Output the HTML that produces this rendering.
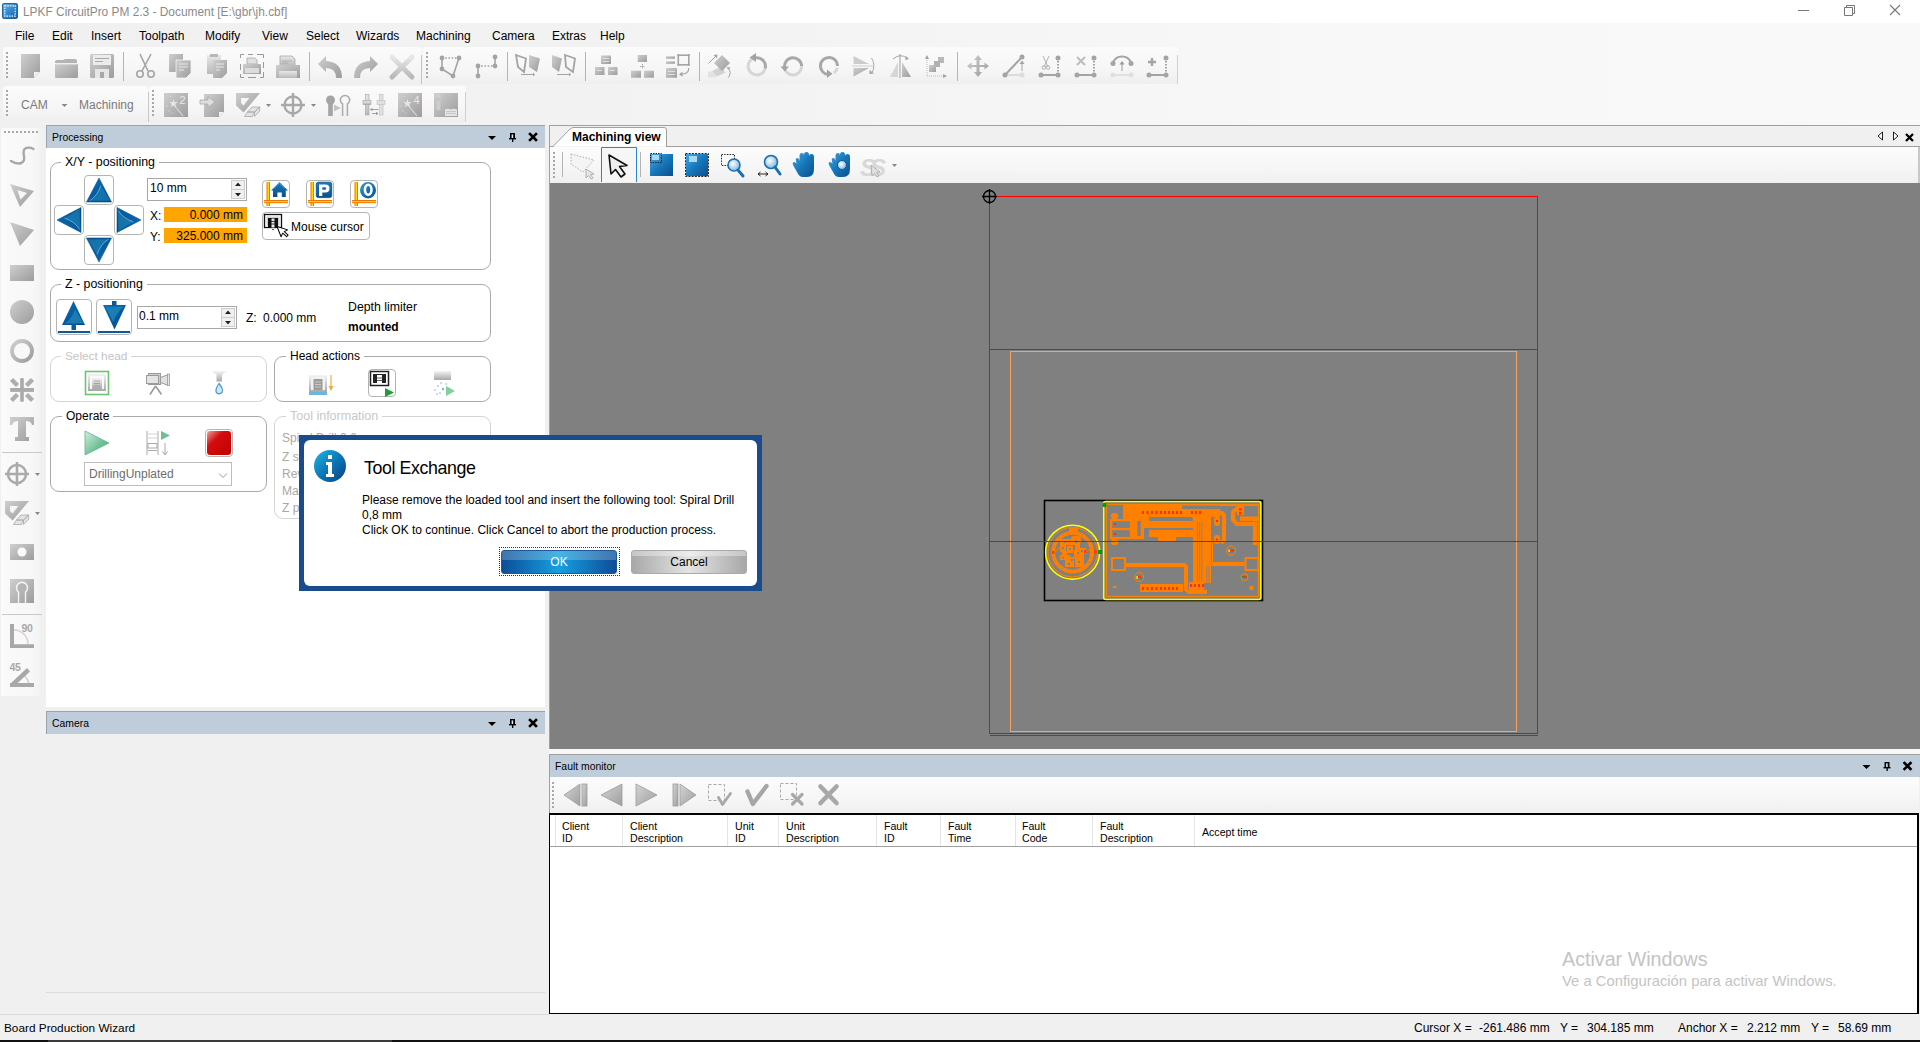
<!DOCTYPE html>
<html><head><meta charset="utf-8">
<style>
*{box-sizing:border-box;margin:0;padding:0}
html,body{width:1920px;height:1042px;overflow:hidden;background:#f0f0f0;font-family:"Liberation Sans",sans-serif;font-size:12px;color:#000;position:relative}
.a{position:absolute}
.t{position:absolute;white-space:nowrap;line-height:1}
svg{position:absolute;overflow:visible}
</style></head><body>
<!-- ===== TITLE BAR ===== -->
<div class="a" style="left:0;top:0;width:1920px;height:23px;background:#fff"></div>
<svg style="left:2px;top:3px" width="16" height="16" viewBox="0 0 17 17"><defs><linearGradient id="tg" x1="0" y1="0" x2="1" y2="1"><stop offset="0" stop-color="#5fb3ea"/><stop offset="1" stop-color="#0b5ea8"/></linearGradient></defs><rect x="0.5" y="0.5" width="16" height="16" rx="1.5" fill="url(#tg)" stroke="#1a5e9a"/><rect x="3" y="3" width="11" height="11" fill="none" stroke="#fff" stroke-width="1.2" stroke-dasharray="1.5 1.2"/></svg>
<div class="t" style="left:23px;top:7px;font-size:11.9px;color:#8a8a8a">LPKF CircuitPro PM 2.3 - Document [E:\gbr\jh.cbf]</div>
<svg style="left:1797px;top:4px" width="104" height="12"><path d="M1 6.5H12" stroke="#777" stroke-width="1"/><path d="M47.5 3.5h8v8h-8z M49.5 3.5v-2h8v8h-2" fill="none" stroke="#777"/><path d="M93 1L103 11M103 1L93 11" stroke="#777" stroke-width="1.1"/></svg>
<!-- ===== MENU + TOOLBAR AREA ===== -->
<div class="a" style="left:0;top:23px;width:1920px;height:102px;background:linear-gradient(90deg,#f0f0f0 0%,#f3f3f3 40%,#f8f8f8 70%,#f9f9f9 100%)"></div>
<div class="t" style="top:29.5px;left:15px">File</div>
<div class="t" style="top:29.5px;left:52px">Edit</div>
<div class="t" style="top:29.5px;left:91px">Insert</div>
<div class="t" style="top:29.5px;left:139px">Toolpath</div>
<div class="t" style="top:29.5px;left:205px">Modify</div>
<div class="t" style="top:29.5px;left:262px">View</div>
<div class="t" style="top:29.5px;left:306px">Select</div>
<div class="t" style="top:29.5px;left:356px">Wizards</div>
<div class="t" style="top:29.5px;left:416px">Machining</div>
<div class="t" style="top:29.5px;left:492px">Camera</div>
<div class="t" style="top:29.5px;left:552px">Extras</div>
<div class="t" style="top:29.5px;left:600px">Help</div>
<!-- toolbar backgrounds -->
<div class="a" style="left:3px;top:47px;width:419px;height:37px;border-radius:3px 3px 0 0;background:linear-gradient(#fbfbfb,#f6f6f6 60%,#efefef)"></div>
<div class="a" style="left:423px;top:47px;width:755px;height:37px;border-radius:3px 3px 0 0;background:linear-gradient(#fbfbfb,#f6f6f6 60%,#efefef)"></div>
<div class="a" style="left:421px;top:55px;width:1px;height:29px;background:#c4c4c4"></div>
<div class="a" style="left:1177px;top:55px;width:1px;height:29px;background:#d0d0d0"></div>
<div class="a" style="left:3px;top:86px;width:145px;height:36px;border-radius:3px 3px 0 0;background:linear-gradient(#fbfbfb,#f6f6f6 60%,#efefef)"></div>
<div class="a" style="left:149px;top:86px;width:317px;height:36px;border-radius:3px 3px 0 0;background:linear-gradient(#fbfbfb,#f6f6f6 60%,#efefef)"></div>
<div class="a" style="left:148px;top:92px;width:1px;height:30px;background:#c8c8c8"></div>
<div class="a" style="left:465px;top:92px;width:1px;height:30px;background:#d0d0d0"></div>
<svg style="left:0;top:0" width="1200" height="130">
<defs>
<linearGradient id="g1" x1="0" y1="0" x2="1" y2="1"><stop offset="0" stop-color="#cfcfcf"/><stop offset="1" stop-color="#9c9c9c"/></linearGradient>
<linearGradient id="g2" x1="0" y1="0" x2="0" y2="1"><stop offset="0" stop-color="#e8e8e8"/><stop offset="1" stop-color="#b8b8b8"/></linearGradient>
</defs>
<g fill="#a8a8a8">
<!-- grips -->
<path d="M6 52h2v2h-2zM6 56h2v2h-2zM6 60h2v2h-2zM6 64h2v2h-2zM6 68h2v2h-2zM6 72h2v2h-2zM6 76h2v2h-2z"/>
<path d="M426 52h2v2h-2zM426 56h2v2h-2zM426 60h2v2h-2zM426 64h2v2h-2zM426 68h2v2h-2zM426 72h2v2h-2zM426 76h2v2h-2z"/>
<path d="M6 90h2v2h-2zM6 94h2v2h-2zM6 98h2v2h-2zM6 102h2v2h-2zM6 106h2v2h-2zM6 110h2v2h-2zM6 114h2v2h-2z"/>
<path d="M152 90h2v2h-2zM152 94h2v2h-2zM152 98h2v2h-2zM152 102h2v2h-2zM152 106h2v2h-2zM152 110h2v2h-2zM152 114h2v2h-2z"/>
</g>
<!-- separators -->
<g fill="#b4b4b4"><rect x="123" y="52" width="1" height="29"/><rect x="309" y="52" width="1" height="29"/><rect x="507" y="52" width="1" height="29"/><rect x="585" y="52" width="1" height="29"/><rect x="699" y="52" width="1" height="29"/><rect x="957" y="52" width="1" height="29"/></g>
<!-- new -->
<path d="M21 54H40V72L34 78H21Z" fill="url(#g1)"/><path d="M34 78V72H40Z" fill="#f0f0f0"/>
<!-- open -->
<path d="M55 62Q55 60 57 60H63L65 59H75Q77 59 77 61V63H55Z" fill="#b4b4b4"/><path d="M55 64H78V77Q78 78 76 78H56Q55 78 55 77Z" fill="url(#g1)"/><path d="M56 64H77" stroke="#e6e6e6" stroke-width="1"/>
<!-- save -->
<rect x="90" y="54" width="24" height="24" rx="1.5" fill="url(#g1)"/><rect x="93" y="55" width="18" height="10" fill="#ececec"/><path d="M95 58.5H109M95 61.5H103" stroke="#a8a8a8" stroke-width="1.2"/><rect x="95" y="69" width="14" height="9" fill="#e6e6e6"/><rect x="100" y="72" width="4" height="6" fill="#a8a8a8"/>
<!-- cut -->
<g stroke="#a4a4a4" fill="none" stroke-width="1.6"><path d="M140 54L148 71M151 54L142 71"/><circle cx="140" cy="74" r="3.2"/><circle cx="151" cy="74" r="3.2"/></g>
<!-- copy -->
<path d="M169 54H183V72H169Z" fill="url(#g1)"/><path d="M176 60H191V73L186 78H176Z" fill="url(#g1)" stroke="#f4f4f4" stroke-width="0.8"/><path d="M179 64H188M179 67H188M179 70H184" stroke="#e8e8e8"/>
<!-- paste -->
<path d="M207 55H221V74H207Z" fill="url(#g2)"/><rect x="210" y="54" width="8" height="3" fill="#b8b8b8"/><path d="M213 60H227V73L222 78H213Z" fill="url(#g1)"/><path d="M216 64H224M216 67H224M216 70H220" stroke="#e8e8e8"/>
<!-- print preview -->
<path d="M240.5 58V54.5H244M248 54.5H253M257 54.5H263.5V58M263.5 62V68M263.5 72V77.5H260M256 77.5H248M244 77.5H240.5V74M240.5 70V64" stroke="#999" fill="none" stroke-dasharray="0"/><path d="M247 58H255L257 60V64H247Z" fill="#e0e0e0" stroke="#a8a8a8" stroke-width="0.8"/><path d="M243 64H261V74H243Z" fill="url(#g1)"/><rect x="245" y="68" width="14" height="5" fill="#dcdcdc"/>
<!-- print -->
<path d="M280 56H292L295 59V66H280Z" fill="url(#g2)" stroke="#a8a8a8" stroke-width="0.8"/><path d="M282 61H292M282 63H288" stroke="#a8a8a8" stroke-width="0.8"/><path d="M276 65H300V78H276Z" fill="url(#g1)"/><rect x="279" y="71" width="18" height="7" fill="url(#g2)"/>
<!-- undo -->
<path d="M318 64L326 56V61Q342 62 342 78H336Q336 68 326 68V72Z" fill="url(#g1)"/>
<!-- redo -->
<path d="M378 64L370 56V61Q354 62 354 78H360Q360 68 370 68V72Z" fill="url(#g1)"/>
<!-- delete -->
<path d="M392 57L412 77M412 57L392 77" stroke="url(#g2)" stroke-width="5" stroke-linecap="round"/>
<!-- polygon -->
<g stroke="#a4a4a4" stroke-width="1.6" fill="none"><path d="M442 58V69L453 76L459 58"/><path d="M442 58H459" stroke-dasharray="1.6 1.6"/></g><g fill="#a4a4a4"><circle cx="442" cy="58" r="2.4"/><circle cx="459" cy="58" r="2.4"/><circle cx="442" cy="69" r="2.4"/><circle cx="453" cy="76" r="2.4"/></g>
<!-- line dots -->
<g stroke="#a4a4a4" stroke-width="1.6" fill="none"><path d="M495 57V66M478 66V76"/><path d="M478 66H495" stroke-dasharray="1.6 1.6"/></g><g fill="#a4a4a4"><circle cx="495" cy="57" r="2.4"/><circle cx="495" cy="66" r="2.4"/><circle cx="478" cy="66" r="2.4"/><circle cx="478" cy="76" r="2.4"/></g>
<!-- mirror-ish 1 -->
<path d="M516 55L526 58.5L524 72L518 67Z" fill="none" stroke="#a4a4a4" stroke-width="1.8"/><path d="M529 55L540 58.5L537 72L529 67Z" fill="url(#g1)"/><path d="M521 74.5H534" stroke="#a4a4a4"/><path d="M533 72.5L535 74.5L533 76.5Z" fill="#a4a4a4"/>
<path d="M552 55L562 58.5L559 72L552 67Z" fill="url(#g1)"/><path d="M565 55L575 58.5L573 72L566 67Z" fill="none" stroke="#a4a4a4" stroke-width="1.8"/><path d="M557 74.5H570" stroke="#a4a4a4"/><path d="M569 72.5L571 74.5L569 76.5Z" fill="#a4a4a4"/>
<!-- arrays -->
<g fill="url(#g1)"><rect x="601" y="55.5" width="10" height="8.5"/><rect x="595" y="67" width="9.5" height="8"/><rect x="608" y="67" width="9.5" height="8"/>
<rect x="637.7" y="55" width="9.3" height="7"/><rect x="631" y="70.7" width="10" height="7"/><rect x="644" y="70.7" width="10" height="7"/>
<rect x="666" y="56.3" width="9" height="2.5"/><rect x="666" y="61.3" width="9" height="2.5"/><rect x="666" y="68" width="11" height="9.7"/></g>
<g fill="#e8e8e8" opacity="0.8"><path d="M603 58h6v1h-6zM603 61h6v1h-6zM597 70h5v1h-5zM610 70h5v1h-5zM668 71h7v1h-7zM668 74h7v1h-7z"/></g>
<path d="M642.5 64V69M640 66.5H645" stroke="#999" stroke-width="0.9" stroke-dasharray="1 0.6"/>
<rect x="678.3" y="55.2" width="10.5" height="9.6" fill="none" stroke="#a4a4a4" stroke-width="1.6"/><g fill="#a4a4a4"><circle cx="678.3" cy="55.2" r="1.1"/><circle cx="688.8" cy="55.2" r="1.1"/><circle cx="678.3" cy="64.8" r="1.1"/><circle cx="688.8" cy="64.8" r="1.1"/></g>
<path d="M688.8 68Q689 74 681 74.3" fill="none" stroke="#a4a4a4" stroke-width="1.1"/><path d="M679 74.3L682.5 71.8V76.8Z" fill="#a4a4a4"/>
<!-- transform icons -->
<rect x="708" y="71.5" width="8" height="6" fill="#e2e2e2"/>
<path d="M712.5 71L721 66.5L725.5 72.5L717 76.5Z" fill="#d2d2d2"/>
<path d="M722 55L730 63L722 71L714 63Z" fill="url(#g1)"/>
<path d="M708.5 63.5L716 56" stroke="#a4a4a4" stroke-width="1"/><path d="M717.5 54.5L717 58.5L713.5 55Z" fill="#a4a4a4"/>
<path d="M728 68Q732 72 728.5 77.5" fill="none" stroke="#a4a4a4" stroke-width="1"/><path d="M727 67L730.5 67.5L728 70Z" fill="#a4a4a4"/>
<path d="M755.31 57.83A8.6 8.6 0 0 1 765.11 68.53" fill="none" stroke="#a8a8a8" stroke-width="3"/><path d="M765.11 68.53A8.6 8.6 0 1 1 753.17 58.51" fill="none" stroke="#d6d6d6" stroke-width="3"/><path d="M749.5 57.5L756 53V62Z" fill="#a4a4a4"/>
<path d="M784.43 67.05A8.6 8.6 0 1 1 801.60 66.30" fill="none" stroke="#a8a8a8" stroke-width="3"/><path d="M801.60 66.30A8.6 8.6 0 0 1 784.43 67.05" fill="none" stroke="#d6d6d6" stroke-width="3"/><path d="M780.5 66.5H789L784.8 71.5Z" fill="#a4a4a4"/>
<path d="M828.25 74.57A8.6 8.6 0 1 1 837.60 66.00" fill="none" stroke="#a8a8a8" stroke-width="3"/><path d="M837.41 67.79A8.6 8.6 0 0 1 833.93 73.04" fill="none" stroke="#d6d6d6" stroke-width="3"/><path d="M827 69.5V78L832.5 73.8Z" fill="#a4a4a4"/>
<!-- mirrors -->
<path d="M853.5 56L869 64H853.5Z" fill="#cdcdcd"/><path d="M853.5 68H869L853.5 76.5Z" fill="url(#g1)"/><path d="M852 66H873" stroke="#dedede" stroke-width="1.6"/><path d="M871.5 58Q876 65 872 73" fill="none" stroke="#a4a4a4" stroke-width="0.9"/><path d="M869.5 70L874 73.5L869.5 74Z" fill="#a4a4a4"/>
<path d="M900 54V78" stroke="#c0c0c0" stroke-width="1.6"/><path d="M890 77L898 62V77Z" fill="#d6d6d6"/><path d="M902 62L911 77H902Z" fill="url(#g1)"/><path d="M893 59Q900 53 907 58" fill="none" stroke="#a4a4a4"/><path d="M906 56L909 59L905 60Z" fill="#a4a4a4"/>
<path d="M927 56V76H946" fill="none" stroke="#bbb" stroke-width="1" stroke-dasharray="1 1"/><path d="M925 59L927 55L929 59ZM943 74L947 76L943 78Z" fill="#a4a4a4"/><rect x="938" y="57" width="6" height="6" fill="#b8b8b8"/><rect x="934" y="61" width="6" height="6" fill="#b0b0b0"/><rect x="929" y="65" width="7" height="7" fill="url(#g1)"/>
<!-- move -->
<path d="M978 55L982 60H979.5V65H984.5V62.5L989 66L984.5 69.5V67H979.5V72H982L978 77L974 72H976.5V67H971.5V69.5L967 66L971.5 62.5V65H976.5V60H974Z" fill="url(#g1)"/>
<!-- line arrow -->
<path d="M1005 75L1022 57" stroke="#a4a4a4" stroke-width="2"/><path d="M1005 75H1022" stroke="#dcdcdc" stroke-width="2"/><circle cx="1005" cy="75" r="2.5" fill="#a4a4a4"/><circle cx="1022" cy="57" r="2.5" fill="#a4a4a4"/><circle cx="1022" cy="75" r="2.5" fill="#dcdcdc"/><path d="M1022 62V71" stroke="#a4a4a4"/><path d="M1019.5 64L1022 60.5L1024.5 64Z" fill="#a4a4a4"/>
<!-- corner icons -->
<g stroke="#a4a4a4" stroke-width="2" fill="none"><path d="M1041 75H1058"/><path d="M1058 58V75" stroke-dasharray="1.6 1.4"/><path d="M1077 75H1094"/><path d="M1094 58V75" stroke-dasharray="1.6 1.4"/><path d="M1149 75H1166"/><path d="M1166 58V75" stroke-dasharray="1.6 1.4"/><path d="M1113 63A9.5 9.5 0 0 1 1131 63"/></g>
<g fill="#a4a4a4"><circle cx="1041" cy="75" r="2.5"/><circle cx="1058" cy="75" r="2.5"/><circle cx="1058" cy="58" r="2.5"/><circle cx="1077" cy="75" r="2.5"/><circle cx="1094" cy="75" r="2.5"/><circle cx="1094" cy="58" r="2.5"/><circle cx="1149" cy="75" r="2.5"/><circle cx="1166" cy="75" r="2.5"/><circle cx="1166" cy="58" r="2.5"/><circle cx="1113" cy="63.5" r="2.5"/><circle cx="1131" cy="63.5" r="2.5"/></g>
<g stroke="#b4b4b4" fill="none" stroke-width="1"><path d="M1043 56L1048 67M1049 56L1044 67"/><circle cx="1044" cy="67.5" r="1.8"/><circle cx="1048" cy="67.5" r="1.8"/></g>
<path d="M1077 57L1085 65M1085 57L1077 65" stroke="#bdbdbd" stroke-width="2"/>
<path d="M1113 75H1131" stroke="#e0e0e0" stroke-width="2"/><circle cx="1113" cy="75" r="2.5" fill="#e0e0e0"/><circle cx="1131" cy="75" r="2.5" fill="#e0e0e0"/><path d="M1122 62V71" stroke="#999"/><path d="M1119.5 64.5L1122 61L1124.5 64.5Z" fill="#999"/>
<path d="M1152 58V66M1148 62H1156" stroke="#a4a4a4" stroke-width="2.4"/>
<!-- toolbar 2 -->
<path d="M61.5 104H67.5L64.5 107Z" fill="#888"/>
<rect x="164" y="93" width="24" height="24" fill="url(#g1)"/><text x="179.5" y="104" font-size="11" fill="#e8e8e8" font-family="Liberation Sans">2</text><path d="M173 104L183 116" stroke="#dcdcdc" stroke-width="1.1"/><path d="M173.5 99L174.5 102.2L177.8 102L175.2 104L176.3 107.2L173.5 105.2L170.7 107.2L171.8 104L169.2 102L172.5 102.2Z" fill="#e8e8e8"/><g fill="#dcdcdc"><circle cx="167" cy="106" r="0.7"/><circle cx="169" cy="111" r="0.7"/><circle cx="172" cy="113" r="0.6"/><circle cx="170.5" cy="96.5" r="0.6"/></g>
<path d="M204 94H224V112L219 117H204Z" fill="url(#g1)"/><path d="M219 117V112H224Z" fill="#f0f0f0"/><path d="M200 100H208V96.5L215 102L208 107.5V104H200Z" fill="#dedede" stroke="#a8a8a8" stroke-width="0.8"/>
<path d="M236 93H260L243.6 112.5L236 105.5Z" fill="url(#g1)"/><path d="M241 98H249.3L243.6 105.6L241 103Z" fill="#f6f6f6"/><path d="M244.5 116.5L247.5 112H254.5L252.5 116.5Z M247.5 112L252 107H259.7L254.5 112Z M254.5 112L259.7 107V111L254.5 116.5Z" fill="#e4e4e4" stroke="#a8a8a8" stroke-width="0.8" stroke-linejoin="round"/><path d="M266 104H271L268.5 107Z" fill="#888"/>
<g stroke="#a8a8a8" stroke-width="2.4" fill="none"><circle cx="293" cy="105" r="8.5"/><path d="M293 93V117M281 105H305"/></g><path d="M311 104H316L313.5 107Z" fill="#888"/>
<circle cx="330.5" cy="100" r="4.5" fill="#a4a4a4"/><rect x="328.2" y="100" width="4.6" height="16" fill="#a4a4a4"/><path d="M334 104.5L341 108L334 111.5Z" fill="#c4c4c4"/><path d="M342.6 116V104A4.6 4.6 0 1 1 347.4 104V116" fill="none" stroke="#ababab" stroke-width="1.5"/>
<g fill="url(#g2)" stroke="#a0a0a0" stroke-width="0.6"><rect x="365.5" y="94.5" width="3.5" height="20.5"/><rect x="363" y="100.5" width="8" height="4"/></g>
<g fill="#e0e0e0" stroke="#bdbdbd" stroke-width="0.6"><rect x="379.5" y="94.5" width="3.5" height="20.5"/><rect x="377" y="100.5" width="8" height="4"/></g>
<path d="M371 109.5H378.5M372 113.5H377.5" stroke="#999" stroke-width="0.9"/><path d="M370 109.5L372.5 107.8V111.2Z M378.5 113.5L376 111.8V115.2Z" fill="#999"/>
<rect x="398" y="93" width="24" height="24" fill="url(#g1)"/><text x="413.5" y="104" font-size="11" fill="#e8e8e8" font-family="Liberation Sans">4</text><path d="M407 104L417 116" stroke="#dcdcdc" stroke-width="1.1"/><path d="M407.5 99L408.5 102.2L411.8 102L409.2 104L410.3 107.2L407.5 105.2L404.7 107.2L405.8 104L403.2 102L406.5 102.2Z" fill="#e8e8e8"/><g fill="#dcdcdc"><circle cx="401" cy="106" r="0.7"/><circle cx="403" cy="111" r="0.7"/><circle cx="406" cy="113" r="0.6"/><circle cx="404.5" cy="96.5" r="0.6"/></g>
<rect x="434" y="93" width="24" height="24" fill="url(#g1)"/><rect x="436.5" y="94" width="4" height="16" fill="#cdcdcd"/><rect x="435.5" y="98" width="6" height="3" fill="#c4c4c4"/><path d="M445 116V109.5Q448 108 451 109.5Q454 108 457 109.5V116Z" fill="#e4e4e4"/><path d="M446 111.5H456M446 113.5H456" stroke="#b4b4b4" stroke-width="0.6"/>
</svg>
<div class="t" style="top:99px;left:21px;color:#7b7b7b">CAM</div>
<div class="t" style="top:99px;left:79px;color:#7b7b7b">Machining</div>
<!-- ===== LEFT VERTICAL TOOLBAR ===== -->
<div class="a" style="left:1px;top:128px;width:44px;height:568px;border-radius:3px 0 0 0;background:linear-gradient(90deg,#fafafa,#f7f7f7 75%,#efefef)"></div>
<svg style="left:0;top:120px" width="50" height="580" viewBox="0 120 50 580">
<g fill="#a8a8a8"><path d="M4 131h2v2h-2zM8 131h2v2h-2zM12 131h2v2h-2zM16 131h2v2h-2zM20 131h2v2h-2zM24 131h2v2h-2zM28 131h2v2h-2zM32 131h2v2h-2zM36 131h2v2h-2z"/></g>
<path d="M11 161Q16.5 164.5 21.5 163Q25 161 24 156Q22.5 149.5 26 148Q30 147 33.5 149" fill="none" stroke="#a8a8a8" stroke-width="2.4" stroke-linecap="round"/>
<path d="M10 184L34 191L20 207Z" fill="url(#g1)"/><path d="M17.5 190L27 193L20.5 199.5Z" fill="#f8f8f8"/>
<path d="M10 222L34 230L20 246Z" fill="url(#g1)"/>
<rect x="10" y="265" width="24" height="16" fill="url(#g1)"/>
<circle cx="22" cy="312" r="12" fill="url(#g1)"/>
<circle cx="22" cy="351" r="10" fill="none" stroke="url(#g1)" stroke-width="3.8"/>
<g fill="#aaaaaa"><rect x="20.2" y="378.2" width="3.6" height="23.5"/><rect x="10.2" y="388" width="23.7" height="3.9"/></g><g stroke="#aeaeae" stroke-width="4.4" fill="none"><path d="M11.5 379.5L17.5 385.5M32.5 379.5L26.5 385.5M11.5 400.5L17.5 394.5M32.5 400.5L26.5 394.5"/></g>
<path d="M10 417H34V425H32Q31 421 26 421V437H29V441H15V437H18V421Q13 421 12 425H10Z" fill="url(#g1)"/>
<rect x="2" y="452" width="40" height="1" fill="#c8c8c8"/>
<g stroke="#ababab" stroke-width="2.6" fill="none"><circle cx="17" cy="474" r="9"/><path d="M17 462V486M5 474H29"/></g><path d="M35 473H40L37.5 476Z" fill="#888"/>
<path d="M5 501H29L12.6 520.5L5 513.5Z" fill="url(#g1)"/><path d="M10 506H18.3L12.6 513.6L10 511Z" fill="#f6f6f6"/><path d="M13.5 524.5L16.5 520H23.5L21.5 524.5Z M16.5 520L21 515H28.7L23.5 520Z M23.5 520L28.7 515V519L23.5 524.5Z" fill="#e4e4e4" stroke="#a8a8a8" stroke-width="0.8" stroke-linejoin="round"/><path d="M35 512H40L37.5 515Z" fill="#888"/>
<rect x="10" y="544" width="24" height="16" fill="url(#g1)"/><circle cx="22" cy="552" r="4.5" fill="#fafafa"/>
<rect x="10" y="579" width="24" height="24" fill="url(#g1)"/><path d="M18.5 603V592A5.5 5.5 0 1 1 25.5 592V603" fill="none" stroke="#f4f4f4" stroke-width="1.4"/><circle cx="22" cy="588" r="4" fill="#b4b4b4"/>
<rect x="2" y="614" width="40" height="1" fill="#c8c8c8"/>
<path d="M14 630A14 14 0 0 1 28 644.5" fill="none" stroke="#d2d2d2" stroke-width="1.5"/><path d="M10 624H14V644.3H34V648H10Z" fill="#a8a8a8"/><text x="21.5" y="631.8" font-size="10.5" font-weight="bold" fill="#a8a8a8" font-family="Liberation Sans" letter-spacing="-0.3">90</text>
<path d="M24 675A19 19 0 0 1 29 683.5" fill="none" stroke="#d2d2d2" stroke-width="1.5"/><path d="M10 683H34V687H10Z M10 684L27 668L30 671.5L14.5 686Z" fill="#a8a8a8"/><text x="9.5" y="671" font-size="10.5" font-weight="bold" fill="#a8a8a8" font-family="Liberation Sans" letter-spacing="-0.3">45</text>
</svg>
<!-- ===== PROCESSING PANEL ===== -->
<div class="a" style="left:46px;top:125px;width:499px;height:23px;background:#bfcddb;border-top:1px solid #9aa3ad;border-left:1px solid #9aa3ad"></div>
<div class="t" style="left:52px;top:131.5px;font-size:10.4px;transform:scaleY(1.1);transform-origin:0 0">Processing</div>
<div class="a" style="left:46px;top:148px;width:499px;height:559px;background:#fff"></div>
<svg style="left:0;top:0" width="560" height="160">
<g transform="translate(0,0)"><path d="M488 136H496L492 140Z" fill="#000"/><path d="M510 133H515V138.2H510Z" fill="#000"/><rect x="511.6" y="134.4" width="1.6" height="3.8" fill="#dfe8f0"/><rect x="509" y="138" width="7" height="1.4" fill="#000"/><rect x="512" y="139" width="1.3" height="3" fill="#000"/><path d="M530 134L536 140M536 134L530 140" stroke="#000" stroke-width="2.6" stroke-linecap="square"/></g>
</svg>
<!-- X/Y group -->
<div class="a" style="left:50px;top:162px;width:441px;height:108px;border:1px solid #aaa;border-radius:9px"></div>
<div class="t" style="left:61px;top:156px;padding:0 4px;background:#fff;font-size:12.4px">X/Y - positioning</div>
<div class="a" style="left:84px;top:175px;width:30px;height:30px;border:1px solid #b4b4b4;border-radius:4px"></div>
<div class="a" style="left:54px;top:205px;width:30px;height:30px;border:1px solid #b4b4b4;border-radius:4px"></div>
<div class="a" style="left:114px;top:205px;width:30px;height:30px;border:1px solid #b4b4b4;border-radius:4px"></div>
<div class="a" style="left:84px;top:235px;width:30px;height:30px;border:1px solid #b4b4b4;border-radius:4px"></div>
<div class="a" style="left:147px;top:178px;width:100px;height:23px;border:1px solid #a8a8a8"></div>
<div class="a" style="left:231px;top:180px;width:14px;height:19px;border:1px solid #ccc;background:#f0f0f0"></div>
<div class="a" style="left:232px;top:189px;width:12px;height:1px;background:#ccc"></div>
<div class="t" style="left:150px;top:182px">10 mm</div>
<div class="t" style="left:150px;top:209.5px">X:</div>
<div class="t" style="left:150px;top:230.5px">Y:</div>
<div class="a" style="left:164px;top:207px;width:83px;height:15px;background:#ffa500"></div>
<div class="a" style="left:164px;top:228px;width:83px;height:15px;background:#ffa500"></div>
<div class="t" style="left:164px;top:209px;width:79px;text-align:right">0.000 mm</div>
<div class="t" style="left:164px;top:230px;width:79px;text-align:right">325.000 mm</div>
<div class="a" style="left:262px;top:180px;width:28px;height:28px;border:1px solid #b4b4b4;border-radius:4px"></div>
<div class="a" style="left:306px;top:180px;width:28px;height:28px;border:1px solid #b4b4b4;border-radius:4px"></div>
<div class="a" style="left:350px;top:180px;width:28px;height:28px;border:1px solid #b4b4b4;border-radius:4px"></div>
<div class="a" style="left:262px;top:212px;width:108px;height:28px;border:1px solid #b4b4b4;border-radius:4px"></div>
<div class="t" style="left:291px;top:221px">Mouse cursor</div>
<!-- Z group -->
<div class="a" style="left:50px;top:284px;width:441px;height:58px;border:1px solid #aaa;border-radius:9px"></div>
<div class="t" style="left:61px;top:278px;padding:0 4px;background:#fff;font-size:12.4px">Z - positioning</div>
<div class="a" style="left:56px;top:299px;width:36px;height:36px;border:1px solid #b4b4b4;border-radius:4px"></div>
<div class="a" style="left:96px;top:299px;width:36px;height:36px;border:1px solid #b4b4b4;border-radius:4px"></div>
<div class="a" style="left:137px;top:306px;width:100px;height:23px;border:1px solid #a8a8a8"></div>
<div class="a" style="left:221px;top:308px;width:14px;height:19px;border:1px solid #ccc;background:#f0f0f0"></div>
<div class="a" style="left:222px;top:317px;width:12px;height:1px;background:#ccc"></div>
<div class="t" style="left:139px;top:310px">0.1 mm</div>
<div class="t" style="left:246px;top:312px">Z:</div>
<div class="t" style="left:263px;top:312px">0.000 mm</div>
<div class="t" style="left:348px;top:301px;font-size:12.3px">Depth limiter</div>
<div class="t" style="left:348px;top:321px;font-weight:bold">mounted</div>
<!-- Select head -->
<div class="a" style="left:50px;top:356px;width:217px;height:46px;border:1px solid #d4d4d4;border-radius:9px"></div>
<div class="t" style="left:61px;top:350.5px;padding:0 4px;background:#fff;color:#c4c4c4;font-size:11.8px">Select head</div>
<!-- Head actions -->
<div class="a" style="left:274px;top:356px;width:217px;height:46px;border:1px solid #aaa;border-radius:9px"></div>
<div class="t" style="left:286px;top:350px;padding:0 4px;background:#fff">Head actions</div>
<div class="a" style="left:368px;top:369px;width:28px;height:28px;border:1px solid #b4b4b4;border-radius:4px"></div>
<!-- Operate -->
<div class="a" style="left:50px;top:416px;width:217px;height:76px;border:1px solid #aaa;border-radius:9px"></div>
<div class="t" style="left:62px;top:410px;padding:0 4px;background:#fff">Operate</div>
<div class="a" style="left:205px;top:429px;width:28px;height:28px;border:1px solid #b4b4b4;border-radius:4px"></div>
<div class="a" style="left:84px;top:462px;width:148px;height:24px;border:1px solid #bdbdbd"></div>
<div class="t" style="left:89px;top:468px;color:#6d6d6d">DrillingUnplated</div>
<!-- Tool information -->
<div class="a" style="left:274px;top:416px;width:217px;height:103px;border:1px solid #d4d4d4;border-radius:9px"></div>
<div class="t" style="left:286px;top:410px;padding:0 4px;background:#fff;color:#c8c8c8;font-size:12.5px">Tool information</div>
<div class="t" style="left:282px;top:432.4px;color:#a8a8a8">Spiral Drill 0,6 mm</div>
<div class="t" style="left:282px;top:451px;color:#a8a8a8">Z speed</div>
<div class="t" style="left:282px;top:467.7px;color:#a8a8a8">Revolutions</div>
<div class="t" style="left:282px;top:485.3px;color:#a8a8a8">Max. lifetime</div>
<div class="t" style="left:282px;top:502.3px;color:#a8a8a8">Z position</div>
<!-- panel icons -->
<svg style="left:0;top:0" width="560" height="520">
<defs>
<linearGradient id="bl" x1="0" y1="0" x2="1" y2="1"><stop offset="0" stop-color="#3d9ad6"/><stop offset="0.5" stop-color="#1571b3"/><stop offset="1" stop-color="#0b4f8c"/></linearGradient>
<linearGradient id="ab" x1="0" y1="0" x2="1" y2="1"><stop offset="0" stop-color="#0e72b6"/><stop offset="0.55" stop-color="#0658a0"/><stop offset="1" stop-color="#034581"/></linearGradient>
<linearGradient id="bl2" x1="0" y1="0" x2="0" y2="1"><stop offset="0" stop-color="#1a7cc2"/><stop offset="1" stop-color="#0a4e8c"/></linearGradient>
<linearGradient id="gr" x1="0" y1="0" x2="1" y2="1"><stop offset="0" stop-color="#d6eee0"/><stop offset="0.6" stop-color="#6cc096"/><stop offset="1" stop-color="#4ead7c"/></linearGradient>
<linearGradient id="rd" x1="0" y1="0" x2="1" y2="1"><stop offset="0" stop-color="#f3a0a0"/><stop offset="0.35" stop-color="#d40d0d"/><stop offset="1" stop-color="#c00000"/></linearGradient>
<linearGradient id="gh" x1="0" y1="0" x2="0" y2="1"><stop offset="0" stop-color="#f4f4f4"/><stop offset="1" stop-color="#a8a8a8"/></linearGradient>
</defs>
<!-- arrows -->
<g transform="rotate(0 99 190)"><path d="M99 178L111.5 202H86.5Z" fill="url(#ab)" stroke="#0a5592" stroke-width="0.6" stroke-linejoin="round"/><path d="M100.8 185.5Q97.5 196 89.5 200.8H110.3Z" fill="#1b82b4" opacity="0.7"/><path d="M100.8 185.5Q97.5 196 89.5 200.8" fill="none" stroke="#8fd0ee" stroke-width="0.7" opacity="0.9"/></g>
<g transform="translate(-30,30)"><g transform="rotate(-90 99 190)"><path d="M99 178L111.5 202H86.5Z" fill="url(#ab)" stroke="#0a5592" stroke-width="0.6" stroke-linejoin="round"/><path d="M100.8 185.5Q97.5 196 89.5 200.8H110.3Z" fill="#1b82b4" opacity="0.7"/><path d="M100.8 185.5Q97.5 196 89.5 200.8" fill="none" stroke="#8fd0ee" stroke-width="0.7" opacity="0.9"/></g></g>
<g transform="translate(30,30)"><g transform="rotate(90 99 190)"><path d="M99 178L111.5 202H86.5Z" fill="url(#ab)" stroke="#0a5592" stroke-width="0.6" stroke-linejoin="round"/><path d="M100.8 185.5Q97.5 196 89.5 200.8H110.3Z" fill="#1b82b4" opacity="0.7"/><path d="M100.8 185.5Q97.5 196 89.5 200.8" fill="none" stroke="#8fd0ee" stroke-width="0.7" opacity="0.9"/></g></g>
<g transform="translate(0,60)"><g transform="rotate(180 99 190)"><path d="M99 178L111.5 202H86.5Z" fill="url(#ab)" stroke="#0a5592" stroke-width="0.6" stroke-linejoin="round"/><path d="M100.8 185.5Q97.5 196 89.5 200.8H110.3Z" fill="#1b82b4" opacity="0.7"/><path d="M100.8 185.5Q97.5 196 89.5 200.8" fill="none" stroke="#8fd0ee" stroke-width="0.7" opacity="0.9"/></g></g>
<!-- spinner arrows -->
<path d="M235 186H241L238 182.5Z M235 193H241L238 196.5Z" fill="#222"/>
<path d="M225 314H231L228 310.5Z M225 321H231L228 324.5Z" fill="#222"/>
<!-- home / P / 0 -->
<g>
<rect x="266.5" y="182" width="3.5" height="24" fill="#f07800"/><rect x="267.5" y="182" width="1.5" height="24" fill="#ffd400"/>
<rect x="264" y="200" width="24" height="3.2" fill="#f07800"/><rect x="264" y="201" width="24" height="1.2" fill="#ffd400"/>
<rect x="310.5" y="182" width="3.5" height="24" fill="#f07800"/><rect x="311.5" y="182" width="1.5" height="24" fill="#ffd400"/>
<rect x="308" y="200" width="24" height="3.2" fill="#f07800"/><rect x="308" y="201" width="24" height="1.2" fill="#ffd400"/>
<rect x="354.5" y="182" width="3.5" height="24" fill="#f07800"/><rect x="355.5" y="182" width="1.5" height="24" fill="#ffd400"/>
<rect x="352" y="200" width="24" height="3.2" fill="#f07800"/><rect x="352" y="201" width="24" height="1.2" fill="#ffd400"/>
</g>
<path d="M271 190.5L279.5 182L288 190.5H285.8V197H281.8V192.5H277.4V197H273V190.5Z" fill="url(#bl2)"/>
<path d="M273 189L279.5 183L285 188.5" fill="none" stroke="#6cc0f0" stroke-width="0.8" opacity="0.8"/>
<rect x="316.3" y="182.2" width="15.4" height="15.4" rx="2" fill="url(#bl2)" stroke="#0a4a88" stroke-width="0.8"/><path d="M319 184.5H325.5Q329.5 184.5 329.5 188.5Q329.5 192.5 325.5 192.5H322.3V196H319Z M322.3 187.2V189.8H324.8Q326.3 189.8 326.3 188.5Q326.3 187.2 324.8 187.2Z" fill="#fff" fill-rule="evenodd"/>
<ellipse cx="368" cy="190.3" rx="8" ry="8.2" fill="url(#bl)"/><ellipse cx="368.2" cy="189.8" rx="3.3" ry="5" fill="none" stroke="#fff" stroke-width="2.6"/>
<!-- mouse cursor icon -->
<rect x="264.5" y="214.5" width="17" height="13" fill="#fff" stroke="#111" stroke-width="1.3"/><rect x="266.5" y="216.5" width="13" height="9" fill="#cfcfcf"/><rect x="268" y="218" width="10" height="10" fill="#111"/><rect x="271.5" y="218.5" width="3" height="9" fill="#e8e8e8"/><path d="M271 221.5H275M271 224H275" stroke="#111" stroke-width="0.8"/><rect x="272" y="229" width="2" height="0.8" fill="#333"/>
<path d="M277 226.5V237.5L279.8 234.8L282.2 239.5L284.2 238.6L281.8 234L285.6 233.6Z" fill="#fff" stroke="#000" stroke-width="1" stroke-linejoin="round" transform="rotate(-22 277 226.5)"/>
<!-- Z up/down -->
<path d="M73.5 301L85 325H62Z" fill="url(#ab)"/><path d="M75 309Q72.5 318 65 323.5H84Z" fill="#1f86b8" opacity="0.8"/><rect x="71.5" y="324" width="4.5" height="6" fill="#0d5a96"/><rect x="58" y="331" width="32" height="2" fill="#0d5a96"/>
<path d="M114.5 329.5L126 305H103Z" fill="url(#ab)"/><path d="M124 306.5Q117 312 113 322L106 307Z" fill="#1f86b8" opacity="0.8"/><rect x="112" y="301" width="4.5" height="5" fill="#0d5a96"/><rect x="98" y="331" width="32" height="2" fill="#0d5a96"/>
<!-- select head icons -->
<rect x="85.5" y="371.5" width="23" height="23" fill="#fff" stroke="#6cc46c" stroke-width="1.6"/><rect x="88" y="374" width="18" height="17" fill="url(#gh)"/><rect x="90" y="376" width="14" height="13" fill="#fafafa"/><rect x="92" y="378" width="10" height="11" fill="url(#gh)"/><path d="M94 381H100M94 383.5H100M94 386H100" stroke="#888" stroke-width="0.6"/>
<rect x="148.5" y="373.5" width="12" height="11" fill="#cfcfcf" stroke="#9a9a9a" stroke-width="1"/><rect x="146.5" y="375.5" width="12" height="8" fill="#e4e4e4" stroke="#9a9a9a" stroke-width="1"/><path d="M160.5 377.5L168.5 374.5V385.5L160.5 382.5Z" fill="#e0e0e0" stroke="#9a9a9a" stroke-width="1"/><rect x="167.5" y="374" width="2" height="11.5" fill="#e8e8e8" stroke="#9a9a9a" stroke-width="0.8"/><path d="M155.5 386L150 394.5M155.5 386L161.5 394.5" stroke="#999" stroke-width="1.6"/>
<path d="M211 371H227L222 374.5V381.5H216.5V374.5Z" fill="url(#gh)"/><path d="M219 383.5Q223.5 389 222.2 392.2Q219.5 395.5 216.3 392.5Q215 389 219 383.5Z" fill="#cfe6f4" stroke="#4a9ad0" stroke-width="1.2"/>
<!-- head actions icons -->
<rect x="309" y="375" width="18" height="17" fill="url(#gh)"/><rect x="311" y="377" width="14" height="13" fill="#f2f2f2"/><rect x="313.5" y="379" width="9" height="11" fill="#9c9c9c"/><path d="M315 382H321M315 384.5H321M315 387H321" stroke="#e0e0e0" stroke-width="0.7"/><rect x="309" y="392" width="18" height="3" fill="#6ab6e0"/><path d="M331 375V389" stroke="#f5a64a" stroke-width="1.2"/><path d="M328.5 386L331 391L333.5 386Z" fill="#f5a64a"/>
<rect x="370.5" y="371.5" width="18" height="14" fill="#fff" stroke="#222" stroke-width="1.5"/><rect x="373" y="374" width="13" height="9" fill="#222"/><rect x="377" y="375" width="5" height="8" fill="#fff"/><path d="M376 378H383M376 380.5H383" stroke="#222" stroke-width="0.7"/><path d="M385 388L394 392.5L385 397Z" fill="#1e9e3a"/>
<rect x="434" y="371" width="17" height="9" fill="url(#gh)"/><g fill="#7fb0d8"><circle cx="435" cy="390" r="0.8"/><circle cx="438" cy="386" r="0.8"/><circle cx="440" cy="393" r="0.8"/><circle cx="443" cy="389" r="1.2"/><circle cx="446" cy="384" r="0.8"/><circle cx="447" cy="393" r="0.8"/><circle cx="437" cy="394" r="0.8"/><circle cx="441" cy="383" r="0.8"/></g><path d="M446 386L455 391L446 396Z" fill="#7fd09a"/>
<!-- operate icons -->
<path d="M85 431L109 443L85 455Z" fill="url(#gr)" stroke="#5cb585" stroke-width="0.8"/>
<g stroke="#a8a8a8" fill="none" stroke-width="1"><path d="M147 431V455M158 431V455"/><path d="M148 434H157M148 438H157" stroke="#d4d4d4"/><rect x="148" y="443.5" width="9" height="4.5"/><path d="M148 450.5H157"/><path d="M165 443V454M162.5 451.5L165 455L167.5 451.5"/></g><path d="M161 431L170 435.5L161 440Z" fill="#6cc096"/>
<rect x="207" y="431" width="24" height="24" rx="3" fill="url(#rd)"/>
<path d="M219 473.5L223 477.5L227 473.5" stroke="#999" fill="none" stroke-width="1"/>
</svg>
<!-- ===== CAMERA PANEL ===== -->
<div class="a" style="left:46px;top:711px;width:499px;height:23px;background:#bfcddb;border-top:1px solid #9aa3ad;border-left:1px solid #9aa3ad"></div>
<div class="t" style="left:52px;top:717.5px;font-size:10.4px;transform:scaleY(1.1);transform-origin:0 0">Camera</div>
<svg style="left:0;top:700px" width="560" height="40" viewBox="0 700 560 40">
<g transform="translate(0,586)"><path d="M488 136H496L492 140Z" fill="#000"/><path d="M510 133H515V138.2H510Z" fill="#000"/><rect x="511.6" y="134.4" width="1.6" height="3.8" fill="#dfe8f0"/><rect x="509" y="138" width="7" height="1.4" fill="#000"/><rect x="512" y="139" width="1.3" height="3" fill="#000"/><path d="M530 134L536 140M536 134L530 140" stroke="#000" stroke-width="2.6" stroke-linecap="square"/></g>
</svg>
<div class="a" style="left:46px;top:992px;width:499px;height:1px;background:#dcdcdc"></div>
<!-- ===== MACHINING VIEW ===== -->
<div class="a" style="left:549px;top:125px;width:1371px;height:22px;background:#f0f0f0;border-top:1px solid #a0a0a0;border-left:1px solid #a0a0a0"></div>
<div class="a" style="left:549px;top:146px;width:1371px;height:1px;background:#a0a0a0"></div>
<svg style="left:540px;top:120px" width="1380" height="30" viewBox="540 120 1380 30">
<path d="M553 146.5L570 129Q571.5 127.5 574 127.5H664Q666.5 127.5 666.5 130V147H553Z" fill="#fff" stroke="#a0a0a0" stroke-width="1"/>
<path d="M554 147H666" stroke="#fff" stroke-width="1.5"/>
<path d="M1882.5 132V140L1878 136Z" fill="#fff" stroke="#000" stroke-width="0.9"/>
<path d="M1893.5 132V140L1898 136Z" fill="#fff" stroke="#000" stroke-width="0.9"/>
<path d="M1906 134L1913 141M1913 134L1906 141" stroke="#000" stroke-width="2.3"/>
</svg>
<div class="t" style="left:572px;top:131px;font-weight:bold">Machining view</div>
<div class="a" style="left:549px;top:147px;width:1370px;height:36px;background:linear-gradient(#fcfcfc,#f6f6f6 60%,#efefef);border-left:1px solid #a0a0a0"></div>
<div class="a" style="left:1918px;top:147px;width:2px;height:36px;background:#c8c8c8"></div>
<svg style="left:540px;top:145px" width="380" height="40" viewBox="540 145 380 40">
<defs>
<linearGradient id="vb" x1="0" y1="0" x2="1" y2="1"><stop offset="0" stop-color="#4aa6e0"/><stop offset="0.5" stop-color="#1577bb"/><stop offset="1" stop-color="#0b4f8c"/></linearGradient>
<radialGradient id="lens" cx="0.4" cy="0.4" r="0.6"><stop offset="0" stop-color="#ffffff"/><stop offset="1" stop-color="#7fb8e6"/></radialGradient>
</defs>
<g fill="#a8a8a8"><path d="M553 152h2v2h-2zM553 156h2v2h-2zM553 160h2v2h-2zM553 164h2v2h-2zM553 168h2v2h-2zM553 172h2v2h-2zM553 176h2v2h-2z"/></g>
<rect x="562" y="152" width="1" height="25" fill="#b4b4b4"/>
<rect x="640" y="152" width="1" height="25" fill="#b4b4b4"/>
<!-- dashed select -->
<path d="M571 154L594 160L583 172L571 164Z" fill="#f4f4f4" stroke="#b0b0b0" stroke-dasharray="1.5 1.5"/>
<path d="M586 169L586 178L588.5 175.5L591 179L593 178L590.5 174.5L594 174Z" fill="#e6e6e6" stroke="#aaa" stroke-width="0.9"/>
<!-- selected arrow button -->
<path d="M601.5 182V147.5H636.5V182" fill="#f6f6f6" stroke="#2c84d8" stroke-width="1"/>
<path d="M609 155L611 174L615.5 169.5L621 177L625 174L619.5 166.5L627 165.5Z" fill="#efefef" stroke="#111" stroke-width="1.6" stroke-linejoin="round"/>
<!-- icon3 -->
<rect x="650" y="154" width="23" height="22" fill="url(#vb)"/><rect x="650.5" y="153.5" width="11" height="9" fill="none" stroke="#222" stroke-dasharray="1.5 1"/><rect x="652" y="155" width="7" height="5" fill="#a8d8f4"/>
<!-- icon4 -->
<rect x="686" y="154" width="22" height="22" fill="url(#vb)"/><rect x="685.5" y="153.5" width="23" height="23" fill="none" stroke="#222" stroke-dasharray="2 1.2"/><rect x="689" y="156" width="8" height="6" fill="#a8d8f4"/>
<!-- zoom box -->
<rect x="721.5" y="154.5" width="13" height="11" fill="none" stroke="#222" stroke-dasharray="1.5 1.2"/><circle cx="734" cy="165" r="6" fill="url(#lens)" stroke="#1a6fb0" stroke-width="1.6"/><path d="M738 170L743 176" stroke="#1a6fb0" stroke-width="3" stroke-linecap="round"/>
<!-- zoom arrows -->
<circle cx="771" cy="162" r="6.5" fill="url(#lens)" stroke="#1a6fb0" stroke-width="1.6"/><path d="M775 167L780 174" stroke="#1a6fb0" stroke-width="3" stroke-linecap="round"/><path d="M758 174H768M758 174L760.5 172M758 174L760.5 176M768 174L765.5 172M768 174L765.5 176" stroke="#111" stroke-width="0.9"/>
<!-- hands -->
<path d="M796 161Q795 158 797.5 158Q799 158 799.5 161V156Q799.5 153 802 153Q804 153 804 156V154.5Q804 152 806.5 152Q809 152 809 155V156Q809 154 811.5 154Q814 154 814 157V169Q814 177 807 177H803Q799 177 797 172L793 165Q792 163 793.5 162Q795 161.5 796.5 163.5Z" fill="url(#vb)"/>
<path d="M832 161Q831 158 833.5 158Q835 158 835.5 161V156Q835.5 153 838 153Q840 153 840 156V154.5Q840 152 842.5 152Q845 152 845 155V156Q845 154 847.5 154Q850 154 850 157V169Q850 177 843 177H839Q835 177 833 172L829 165Q828 163 829.5 162Q831 161.5 832.5 163.5Z" fill="url(#vb)"/><circle cx="842" cy="165" r="4.5" fill="url(#lens)" stroke="#0d5a96"/>
<!-- SS -->
<text x="860" y="176" font-size="24" font-weight="bold" font-style="italic" fill="#d8d8d8" font-family="Liberation Sans" letter-spacing="-6">SS</text>
<path d="M871 165L872 176L874.5 173.5L877 177L879 176L876.5 172.5L880 172Z" fill="#e0e0e0" stroke="#aaa" stroke-width="0.9"/>
<path d="M892 164H897L894.5 167Z" fill="#888"/>
</svg>
<!-- canvas -->
<div class="a" style="left:549px;top:183px;width:1371px;height:566px;background:#808080"></div>
<div class="a" style="left:549px;top:183px;width:1px;height:566px;background:#a0a0a0"></div>
<div class="a" style="left:549px;top:749px;width:1371px;height:5px;background:#f8f8f8"></div>
<svg style="left:549px;top:183px" width="1371" height="566" viewBox="549 183 1371 566">
<g fill="none" shape-rendering="crispEdges">
<path d="M989.5 196.5H1537.5V349.5" stroke="#ff0000"/>
<path d="M989.5 196.5V349.5" stroke="#ff0000"/>
<path d="M989.5 349.5H1537.5V733.5H989.5Z" stroke="#008000"/>
<path d="M989.5 735.5H1537.5" stroke="#ff0000" stroke-width="1.5"/>
<path d="M1010.5 351.5H1516.5V731.5H1010.5Z" stroke="#f4a460"/>
</g>
<circle cx="989.5" cy="196.5" r="6" fill="none" stroke="#000" stroke-width="1.3"/><path d="M989.5 189V204M982 196.5H997" stroke="#000" stroke-width="1.3"/>
<!-- PCB -->
<rect x="1044.5" y="500.5" width="218" height="100" fill="none" stroke="#000" stroke-width="1.6"/>
<rect x="1103.7" y="501.6" width="157" height="97.8" rx="2" fill="none" stroke="#ffff00" stroke-width="1.5"/>
<rect x="1106.4" y="504.4" width="152" height="92" fill="none" stroke="#ff8000" stroke-width="1.1"/>
<!-- round board -->
<g fill="none">
<circle cx="1072.6" cy="552.2" r="27" stroke="#ffff00" stroke-width="1.5"/>
<circle cx="1072.6" cy="552.2" r="24.7" stroke="#ff8000" stroke-width="1"/>
<circle cx="1072.6" cy="552.2" r="19.4" stroke="#ff8000" stroke-width="3.8"/>
<circle cx="1072.6" cy="552.2" r="19.2" stroke="#808080" stroke-width="1" stroke-dasharray="1 4"/>
</g>
<g fill="#ff8000">
<rect x="1069" y="527.5" width="9" height="6"/>
<rect x="1060" y="539" width="16" height="6"/><rect x="1071" y="536" width="10" height="8" rx="3"/>
<rect x="1060" y="545" width="6" height="7"/><rect x="1067" y="546" width="6" height="7"/><rect x="1075" y="543" width="5" height="8"/>
<rect x="1062" y="551" width="5" height="6"/><rect x="1074" y="550" width="10" height="8"/>
<rect x="1060" y="555" width="10" height="5"/><rect x="1065" y="557" width="9" height="10"/><rect x="1075" y="558" width="9" height="9"/>
<rect x="1080" y="548" width="6" height="6"/>
</g>
<g fill="#808080">
<rect x="1064" y="541" width="2" height="2"/><rect x="1075" y="540" width="2" height="3"/><rect x="1062" y="547" width="2" height="2"/><rect x="1069" y="548" width="2" height="2"/>
<rect x="1077" y="552" width="2" height="2"/><rect x="1068" y="553" width="3" height="2"/><rect x="1062" y="557" width="2" height="1.5"/><rect x="1068" y="563" width="2" height="2"/><rect x="1078" y="561" width="2" height="2"/><rect x="1081" y="550" width="2" height="2"/><rect x="1071" y="559" width="2" height="2"/>
</g>
<path d="M1053.5 553L1061 547M1085 553L1092.5 547" stroke="#ff8000" stroke-width="1"/>
<g fill="#ff4000"><rect x="1052" y="551" width="2.5" height="3"/><rect x="1084" y="550" width="2.5" height="3"/><rect x="1094" y="550" width="3" height="4"/></g>
<rect x="1098" y="550" width="4" height="4" fill="#00a000"/>
<circle cx="1104.5" cy="505" r="2.2" fill="#00a000"/>
<!-- main board -->
<g fill="#ff8000">
<rect x="1123" y="504.5" width="135" height="1.5"/>
<path d="M1123 506H1182V509H1220V517H1193V521H1123Z"/>
<rect x="1144" y="521" width="49" height="7"/>
<rect x="1110" y="519" width="21" height="20"/>
<path d="M1131 516H1144V539H1131Z"/>
<rect x="1149" y="530" width="44" height="7"/><rect x="1158" y="536" width="18" height="5"/>
<rect x="1193" y="517" width="18" height="66"/>
<rect x="1140" y="584" width="43" height="8"/>
<path d="M1126 563H1185L1188 566V590H1207V594H1188L1184 590V567H1126Z"/>
<rect x="1189" y="582" width="15" height="9"/>
<path d="M1211 562H1244.5V566H1211Z"/>

</g>
<g fill="#808080">
<rect x="1112.2" y="521.2" width="17.7" height="6.7"/><rect x="1112.2" y="530.2" width="17.7" height="6.7"/>
<rect x="1137.3" y="521" width="3.4" height="15"/>
<rect x="1182" y="505.5" width="38" height="3.5"/>
<rect x="1149" y="517" width="44" height="4"/>
<rect x="1197" y="522" width="0.8" height="60"/><rect x="1199.3" y="522" width="0.8" height="60"/><rect x="1201.5" y="522" width="0.8" height="60"/>
<rect x="1206.5" y="566" width="0.8" height="24"/><rect x="1208.5" y="566" width="0.8" height="24"/>

</g>
<g fill="none" stroke="#ff8000">
<rect x="1112" y="558" width="13" height="12" stroke-width="2"/>
<rect x="1245.5" y="558" width="13" height="12" stroke-width="2"/>
<circle cx="1139.2" cy="577" r="4.5"/><circle cx="1231" cy="550.6" r="4.6"/><circle cx="1244.5" cy="577.2" r="3.5"/>

<path d="M1212.5 540V562" stroke-width="1"/>
<path d="M1211 513H1222L1224 515V540L1221 543" stroke-width="4"/>
<path d="M1238 508L1233 512V520L1237 524H1255V545" stroke-width="4.2"/>
<path d="M1240 518.7H1258" stroke-width="4.4"/>
<path d="M1193 519L1203 511H1211" stroke-width="3"/>
</g>
<g fill="#ff8000"><path d="M1112 588Q1114.5 583 1117 588Z"/><circle cx="1251.5" cy="588" r="2.3"/><rect x="1237" y="506" width="7" height="9"/><rect x="1214" y="517" width="6" height="9" rx="2.5"/><rect x="1214" y="535" width="6" height="9" rx="2.5"/><rect x="1111" y="513" width="7" height="6" rx="2.5"/><rect x="1111" y="539" width="7" height="6" rx="2.5"/><circle cx="1254.5" cy="519" r="2.5"/><circle cx="1255" cy="541" r="2.5"/></g>
<g fill="#ff3000">
<rect x="1142" y="511" width="2" height="3"/><rect x="1146.5" y="511" width="2" height="3"/><rect x="1151" y="511" width="2" height="3"/><rect x="1155.5" y="511" width="2" height="3"/><rect x="1160" y="511" width="2" height="3"/><rect x="1164" y="511" width="2" height="3"/><rect x="1168" y="511" width="2" height="3"/><rect x="1172" y="511" width="2" height="3"/><rect x="1176" y="511" width="2" height="3"/><rect x="1180" y="511" width="2" height="3"/>
<rect x="1191" y="511" width="2" height="3"/><rect x="1195" y="511" width="2" height="3"/><rect x="1199" y="511" width="2" height="3"/>
<rect x="1142" y="587" width="2" height="3"/><rect x="1146.5" y="587" width="2" height="3"/><rect x="1151" y="587" width="2" height="3"/><rect x="1155.5" y="587" width="2" height="3"/><rect x="1160" y="587" width="2" height="3"/><rect x="1164" y="587" width="2" height="3"/><rect x="1168" y="587" width="2" height="3"/><rect x="1172" y="587" width="2" height="3"/><rect x="1176" y="587" width="2" height="3"/>
<rect x="1190" y="584" width="2" height="3"/><rect x="1194" y="584" width="2" height="3"/><rect x="1198" y="584" width="2" height="3"/><rect x="1202" y="584" width="2" height="3"/>
<rect x="1114" y="523" width="2" height="2"/><rect x="1114" y="533" width="2" height="2"/><rect x="1239" y="508" width="2.5" height="2.5"/><rect x="1239" y="512" width="2.5" height="2.5"/><rect x="1216" y="520" width="2" height="2"/><rect x="1216" y="538.5" width="2" height="2"/>
<rect x="1138" y="576" width="3" height="2"/><rect x="1230" y="549.5" width="3" height="2"/><rect x="1243.5" y="576" width="3" height="2"/>
</g>
<g fill="#00a000"><rect x="1141" y="578" width="1.2" height="1.2"/><rect x="1233" y="550" width="1.2" height="1.2"/><rect x="1242" y="576" width="1.2" height="1.2"/></g>
<rect x="1136.5" y="576" width="1.2" height="3" fill="#ffff00"/><rect x="1228.5" y="549.5" width="1.2" height="2.5" fill="#ffff00"/>
<path d="M989 541.5H1537" stroke="#ff0000" stroke-width="1" shape-rendering="crispEdges"/>
</svg>
<!-- ===== FAULT MONITOR ===== -->
<div class="a" style="left:549px;top:754px;width:1371px;height:23px;background:#bfcddb;border-top:1px solid #a0a0a0;border-left:1px solid #a0a0a0"></div>
<div class="t" style="left:555px;top:760.5px;font-size:10.4px;transform:scaleY(1.1);transform-origin:0 0">Fault monitor</div>
<svg style="left:1850px;top:755px" width="70" height="22" viewBox="1850 755 70 22">
<g transform="translate(1374.5,629)"><path d="M488 136H496L492 140Z" fill="#000"/><path d="M510 133H515V138.2H510Z" fill="#000"/><rect x="511.6" y="134.4" width="1.6" height="3.8" fill="#dfe8f0"/><rect x="509" y="138" width="7" height="1.4" fill="#000"/><rect x="512" y="139" width="1.3" height="3" fill="#000"/><path d="M530 134L536 140M536 134L530 140" stroke="#000" stroke-width="2.6" stroke-linecap="square"/></g>
</svg>
<div class="a" style="left:549px;top:777px;width:1370px;height:36px;background:linear-gradient(#fcfcfc,#f6f6f6 60%,#efefef);border-left:1px solid #a0a0a0"></div>
<svg style="left:540px;top:775px" width="320" height="40" viewBox="540 775 320 40">
<defs><linearGradient id="fg" x1="0" y1="0" x2="1" y2="1"><stop offset="0" stop-color="#d4d4d4"/><stop offset="1" stop-color="#9e9e9e"/></linearGradient></defs>
<g fill="#a8a8a8"><path d="M552 782h2v2h-2zM552 786h2v2h-2zM552 790h2v2h-2zM552 794h2v2h-2zM552 798h2v2h-2zM552 802h2v2h-2zM552 806h2v2h-2z"/></g>
<path d="M564 795L580 784V806Z" fill="url(#fg)" stroke="#9c9c9c" stroke-width="0.8"/><rect x="582" y="784" width="5" height="22" fill="url(#fg)" stroke="#9c9c9c" stroke-width="0.8"/>
<path d="M601 795L622 784V806Z" fill="url(#fg)" stroke="#9c9c9c" stroke-width="0.8"/>
<path d="M657 795L636 784V806Z" fill="url(#fg)" stroke="#9c9c9c" stroke-width="0.8"/>
<rect x="673" y="784" width="5" height="22" fill="url(#fg)" stroke="#9c9c9c" stroke-width="0.8"/><path d="M696 795L680 784V806Z" fill="url(#fg)" stroke="#9c9c9c" stroke-width="0.8"/>
<rect x="708.5" y="784.5" width="16" height="16" fill="none" stroke="#a8a8a8" stroke-dasharray="3 2"/><path d="M718.5 797.5L722.5 804.5L730.5 793.5" fill="none" stroke="#a8a8a8" stroke-width="2.8" stroke-linecap="round" stroke-linejoin="round"/>
<path d="M747.5 791.5L752.8 804L766.5 786" fill="none" stroke="#a6a6a6" stroke-width="4.4" stroke-linejoin="round" stroke-linecap="round"/>
<rect x="780.5" y="783.5" width="16" height="16" fill="none" stroke="#a8a8a8" stroke-dasharray="3 2"/><path d="M792.5 794.5L802 804M802 794.5L792.5 804" stroke="#a8a8a8" stroke-width="3.2" stroke-linecap="round"/>
<path d="M820.5 786.5L836.5 803M836.5 786.5L820.5 803" stroke="#a8a8a8" stroke-width="4.6" stroke-linecap="round"/>
</svg>
<!-- table -->
<div class="a" style="left:549px;top:813px;width:1370px;height:201px;background:#fff;border-top:2px solid #000;border-left:1px solid #000;border-right:2px solid #000;border-bottom:1px solid #000"></div>
<div class="a" style="left:550px;top:846px;width:1367px;height:1px;background:#a0a0a0"></div>
<div class="a" style="left:555px;top:815px;width:1px;height:31px;background:#e4e4e4"></div>
<div class="a" style="left:622px;top:815px;width:1px;height:31px;background:#e4e4e4"></div>
<div class="a" style="left:727px;top:815px;width:1px;height:31px;background:#e4e4e4"></div>
<div class="a" style="left:778px;top:815px;width:1px;height:31px;background:#e4e4e4"></div>
<div class="a" style="left:876px;top:815px;width:1px;height:31px;background:#e4e4e4"></div>
<div class="a" style="left:940px;top:815px;width:1px;height:31px;background:#e4e4e4"></div>
<div class="a" style="left:1015px;top:815px;width:1px;height:31px;background:#e4e4e4"></div>
<div class="a" style="left:1092px;top:815px;width:1px;height:31px;background:#e4e4e4"></div>
<div class="a" style="left:1194px;top:815px;width:1px;height:31px;background:#e4e4e4"></div>
<div style="position:absolute;top:819.5px;font-size:10.6px;line-height:12px;white-space:nowrap">
<div class="a" style="left:562px">Client<br>ID</div>
<div class="a" style="left:630px">Client<br>Description</div>
<div class="a" style="left:735px">Unit<br>ID</div>
<div class="a" style="left:786px">Unit<br>Description</div>
<div class="a" style="left:884px">Fault<br>ID</div>
<div class="a" style="left:948px">Fault<br>Time</div>
<div class="a" style="left:1022px">Fault<br>Code</div>
<div class="a" style="left:1100px">Fault<br>Description</div>
<div class="a" style="left:1202px;top:6px">Accept time</div>
</div>
<div class="t" style="left:1562px;top:949.5px;font-size:19.7px;color:#c4c4c4">Activar Windows</div>
<div class="t" style="left:1562px;top:974px;font-size:14.8px;color:#c4c4c4">Ve a Configuración para activar Windows.</div>
<!-- ===== DIALOG ===== -->
<div class="a" style="left:299px;top:435px;width:463px;height:156px;background:#1a4c8c"></div>
<div class="a" style="left:304px;top:440px;width:453px;height:146px;background:#fff;border-radius:6px"></div>
<svg style="left:310px;top:446px" width="40" height="40" viewBox="310 446 40 40">
<defs><linearGradient id="ig" x1="0" y1="0" x2="1" y2="1"><stop offset="0" stop-color="#1fb6e8"/><stop offset="0.5" stop-color="#0a78b8"/><stop offset="1" stop-color="#0a3f80"/></linearGradient></defs>
<circle cx="330" cy="466" r="16" fill="url(#ig)"/>
<rect x="328" y="455" width="4" height="4" fill="#fff"/><path d="M326 462H332V474H334V477H326V474H328V465H326Z" fill="#fff"/>
</svg>
<div class="t" style="left:364px;top:460px;font-size:17.8px;letter-spacing:-0.4px">Tool Exchange</div>
<div class="t" style="left:362px;top:494px">Please remove the loaded tool and insert the following tool: Spiral Drill</div>
<div class="t" style="left:362px;top:509px">0,8 mm</div>
<div class="t" style="left:362px;top:524px">Click OK to continue. Click Cancel to abort the production process.</div>
<div class="a" style="left:499px;top:547px;width:121px;height:29px;border:1px dotted #333"></div>
<div class="a" style="left:501px;top:550px;width:116px;height:24px;border-radius:3px;background:linear-gradient(90deg,#0e4d98,#15a0e0 50%,#0e4d98);border:1px solid #1d5a9c"></div><div class="a" style="left:502px;top:551px;width:114px;height:9px;border-radius:2px 2px 0 0;background:rgba(255,255,255,0.22)"></div>
<div class="t" style="left:501px;top:556px;width:116px;text-align:center;color:#fff">OK</div>
<div class="a" style="left:631px;top:550px;width:116px;height:24px;border-radius:3px;background:linear-gradient(90deg,#a8a8a8,#e4e4e4 50%,#a8a8a8);border:1px solid #aaa"></div>
<div class="a" style="left:632px;top:551px;width:114px;height:5px;border-radius:2px 2px 0 0;background:rgba(255,255,255,0.35)"></div>
<div class="t" style="left:631px;top:556px;width:116px;text-align:center">Cancel</div>
<!-- ===== STATUS BAR ===== -->
<div class="a" style="left:0;top:1014px;width:549px;height:1px;background:#dadada"></div>
<div class="a" style="left:0;top:1040px;width:1920px;height:2px;background:#111"></div>
<div class="a" style="left:48px;top:1040px;width:344px;height:2px;background:#3a3a3a"></div>
<div class="t" style="left:4px;top:1023px;font-size:11.8px">Board Production Wizard</div>
<div class="t" style="left:1414px;top:1022px">Cursor X =</div>
<div class="t" style="left:1479px;top:1022px">-261.486 mm</div>
<div class="t" style="left:1560px;top:1022px">Y =</div>
<div class="t" style="left:1587px;top:1022px">304.185 mm</div>
<div class="t" style="left:1678px;top:1022px">Anchor X =</div>
<div class="t" style="left:1747px;top:1022px">2.212 mm</div>
<div class="t" style="left:1811px;top:1022px">Y =</div>
<div class="t" style="left:1838px;top:1022px">58.69 mm</div>
</body></html>
